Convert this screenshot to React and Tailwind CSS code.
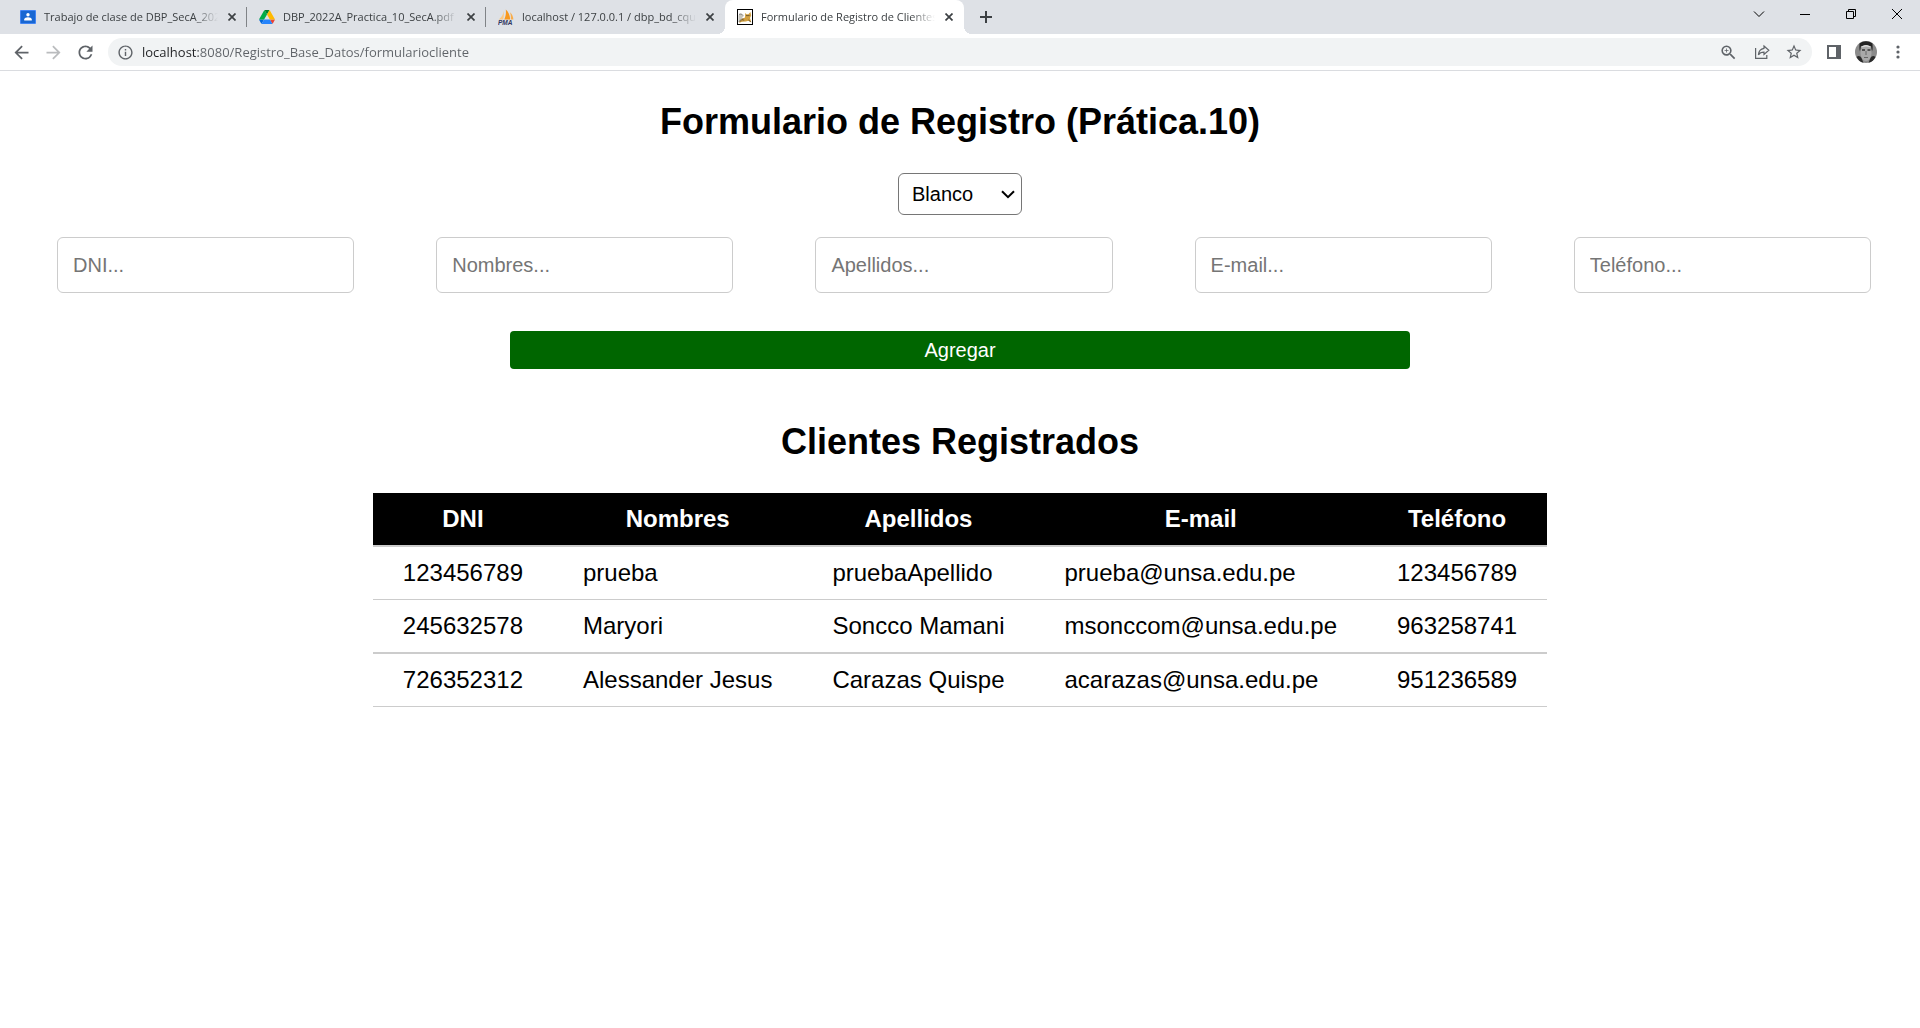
import React from "react";
import {
  MdArrowBack,
  MdArrowForward,
  MdRefresh,
  MdInfoOutline,
  MdZoomIn,
  MdStarBorder,
} from "react-icons/md";

function ClassroomIcon() {
  return (
    <svg viewBox="0 0 16 14" className="h-[14px] w-4">
      <rect width="16" height="14" rx="1" fill="#4285f4" />
      <rect x="1" y="1" width="14" height="12" fill="#1967d2" />
      <circle cx="8" cy="4.8" r="1.7" fill="#fff" />
      <path d="M4.2 10.4V9.6C4.2 8 6.4 7.3 8 7.3s3.8.7 3.8 2.3v.8z" fill="#fff" />
    </svg>
  );
}

function DriveIcon() {
  return (
    <svg viewBox="0 0 87.3 78" className="h-[14px] w-4">
      <path d="m6.6 66.85 3.85 6.65c.8 1.4 1.95 2.5 3.3 3.3L27.5 53H0c0 1.55.4 3.1 1.2 4.5z" fill="#0066da" />
      <path d="M43.65 25 29.9 1.2c-1.35.8-2.5 1.9-3.3 3.3L1.2 48.5A9 9 0 0 0 0 53h27.5z" fill="#00ac47" />
      <path d="M73.55 76.8c1.35-.8 2.5-1.9 3.3-3.3l1.6-2.75L86.1 57.5c.8-1.4 1.2-2.95 1.2-4.5H59.8l5.85 11.5z" fill="#ea4335" />
      <path d="M43.65 25 57.4 1.2C56.05.4 54.5 0 52.9 0H34.4c-1.6 0-3.15.45-4.5 1.2z" fill="#00832d" />
      <path d="M59.8 53H27.5L13.75 76.8c1.35.8 2.9 1.2 4.5 1.2h50.8c1.6 0 3.15-.45 4.5-1.2z" fill="#2684fc" />
      <path d="m73.4 26.5-12.7-22c-.8-1.4-1.95-2.5-3.3-3.3L43.65 25 59.8 53h27.45c0-1.55-.4-3.1-1.2-4.5z" fill="#ffba00" />
    </svg>
  );
}

function PhpMyAdminIcon() {
  return (
    <svg viewBox="0 0 16 16" className="size-4">
      <path d="M5.500 2C5.400 5.500 4 8 .8 10.400h4.400C5.900 7.500 6 4.800 5.500 2z" fill="#fbc983" />
      <path d="M7.800.6C10.600 3.200 12.200 6.600 12 10.400H6.200C7.800 7.400 8.200 4 7.800.6z" fill="#f8981d" />
      <path d="M12 3.200c2.200 2 3.200 4.400 3.400 7.200h-2.600c.2-2.700 0-5-.8-7.200z" fill="#f9ad4b" />
      <text x="0" y="15.800" fontSize="6.500" fontWeight="700" fontStyle="italic" fill="#2f3560" fontFamily="Liberation Sans, sans-serif">
        PMA
      </text>
    </svg>
  );
}

function TomcatIcon() {
  return (
    <svg viewBox="0 0 16 16" className="size-4">
      <rect x=".5" y=".5" width="15" height="15" fill="#fff" stroke="#000" />
      <path d="M1.500 6.500C3 4.500 5.500 4.500 7 6.500L5 9 1.500 13z" fill="#c9c6bd" />
      <path d="M2 5.500c1.200-.8 2.600-.6 3.500.5M2 12.500c1.500-2 3-3 5-3" fill="none" stroke="#777" />
      <path d="M8.200 4l1.400 1.200h1.800L13.400 3l.8 3.600-1.200 2.400 1.400 4.400-3-1.600-2.600.8-3.800.2-3 1.200 2.200-3.800L8 8.400z" fill="#d2a041" />
      <path d="M2.400 13l2.400-2.400 2.400.6M11.400 11l2.400 1.800M9 6.600h3.600" fill="none" stroke="#5a4a2a" strokeWidth=".8" />
    </svg>
  );
}

const tabs = [
  { title: "Trabajo de clase de DBP_SecA_2022", Icon: ClassroomIcon },
  { title: "DBP_2022A_Practica_10_SecA.pdf -", Icon: DriveIcon },
  { title: "localhost / 127.0.0.1 / dbp_bd_cquispe", Icon: PhpMyAdminIcon },
  { title: "Formulario de Registro de Clientes", Icon: TomcatIcon, active: true },
];

function Tab({ title, Icon, active, divider }) {
  return (
    <div
      className={
        active
          ? "relative flex h-full w-[239px] items-center rounded-t-lg bg-white pr-[9px] pl-3 before:absolute before:bottom-0 before:-left-2 before:size-2 before:bg-[radial-gradient(circle_at_0_0,transparent_8px,white_8px)] after:absolute after:-right-2 after:bottom-0 after:size-2 after:bg-[radial-gradient(circle_at_100%_0,transparent_8px,white_8px)]"
          : "relative flex h-full w-[239px] items-center pr-[9px] pl-3"
      }
    >
      <button type="button" className="flex min-w-0 flex-1 items-center gap-2 text-left">
        <span className="shrink-0">
          <Icon />
        </span>
        <span className="flex-1 overflow-hidden whitespace-nowrap text-[11px] leading-4 text-[#3c4043] [mask-image:linear-gradient(to_right,black_86%,transparent)]">
          {title}
        </span>
      </button>
      <button type="button" aria-label="Cerrar pestaña" className="ml-2 flex h-4 w-3 items-center justify-center">
        <svg viewBox="0 0 8 8" className="size-2">
          <path d="M.5.5l7 7M7.5.5l-7 7" stroke="#3c4043" strokeWidth="1.7" />
        </svg>
      </button>
      {divider && <span className="absolute top-[7px] right-0 h-5 w-px bg-[#808387]" />}
    </div>
  );
}

function WindowButton({ label, children }) {
  return (
    <button type="button" aria-label={label} className="flex h-7 w-[46px] items-center justify-center">
      <svg viewBox="0 0 10 10" className="size-[10px] overflow-visible" fill="none" stroke="#000">
        {children}
      </svg>
    </button>
  );
}

function Browser() {
  return (
    <header className="border-b border-[#dadce0] font-['Open_Sans','Noto_Sans',sans-serif]">
      <div className="flex h-[34px] bg-[#dee1e6] pl-2">
        {tabs.map((t, i) => (
          <Tab key={t.title} {...t} divider={i < 2} />
        ))}
        <button type="button" aria-label="Nueva pestaña" className="ml-2 flex w-7 items-center justify-center">
          <svg viewBox="0 0 12 12" className="size-3">
            <path d="M6 0v12M0 6h12" stroke="#3c4043" strokeWidth="2" />
          </svg>
        </button>
        <div className="ml-auto flex">
          <WindowButton label="Buscar pestañas">
            <path d="M0 2.5l5 5 5-5" />
          </WindowButton>
          <WindowButton label="Minimizar">
            <path d="M0 5.5h10" />
          </WindowButton>
          <WindowButton label="Restaurar">
            <path d="M.5 2.5h7v7h-7zM2.5 2.5v-2h7v7h-2" />
          </WindowButton>
          <WindowButton label="Cerrar">
            <path d="M0 0l10 10M10 0L0 10" />
          </WindowButton>
        </div>
      </div>
      <div className="flex h-9 items-center bg-white pr-[10px] pl-[5px] text-[#5f6368]">
        <button type="button" aria-label="Atrás" className="flex w-8 justify-center">
          <MdArrowBack size={21} />
        </button>
        <button type="button" aria-label="Adelante" className="flex w-8 justify-center text-[#babcbe]">
          <MdArrowForward size={21} />
        </button>
        <button type="button" aria-label="Volver a cargar" className="flex w-8 justify-center">
          <MdRefresh size={21} />
        </button>
        <div className="ml-[7px] flex h-7 flex-1 items-center rounded-full bg-[#f1f3f4] pr-[2px] pl-[9px]">
          <MdInfoOutline size={17} />
          <input
            type="text"
            aria-label="Dirección"
            defaultValue="localhost:8080/Registro_Base_Datos/formulariocliente"
            className="ml-2 min-w-0 flex-1 bg-[linear-gradient(90deg,#202124_56px,#5f6368_56px)] bg-clip-text text-[13px] leading-5 text-transparent outline-none"
          />
          <button type="button" aria-label="Zoom" className="flex w-[33px] justify-center">
            <MdZoomIn size={19} />
          </button>
          <button type="button" aria-label="Compartir" className="flex w-[33px] justify-center">
            <svg viewBox="0 0 16 16" className="size-4" fill="none" stroke="#5f6368" strokeWidth="1.2">
              <path d="M1.6 4v10.4h11.2V11" />
              <path d="M10 2l4.8 4.2L10 10.4V8.2c-2.600 0-4.400.8-5.600 2.600.3-3.600 2.200-6 5.600-6.500z" />
            </svg>
          </button>
          <button type="button" aria-label="Marcador" className="flex w-8 justify-center">
            <MdStarBorder size={18} />
          </button>
        </div>
        <button type="button" aria-label="Panel lateral" className="ml-[6px] flex w-8 justify-center">
          <svg viewBox="0 0 14 14" className="size-[14px]">
            <path fillRule="evenodd" d="M0 0h14v14H0zM2 2v10h7V2z" fill="#5f6368" />
          </svg>
        </button>
        <button type="button" aria-label="Perfil" className="flex w-8 justify-center">
          <svg viewBox="0 0 22 22" className="size-[22px]">
            <circle cx="11" cy="11" r="11" fill="#8b8b8b" />
            <path d="M4.500 2.500a11 11 0 0 1 13 0c0 2 .5 5-.5 8L16 5H6l-1 5.500c-1-3-.5-6-.5-8z" fill="#222" />
            <ellipse cx="11" cy="12" rx="5.500" ry="8" fill="#a9a9a9" />
            <path d="M6 6.500C7 3 15 3 16 6.500l-5-1z" fill="#d8d8d8" />
            <path d="M7 9h3M12.500 9h3" stroke="#333" strokeWidth="1.300" />
            <path d="M11 10v4M9 16.500h4" stroke="#666" strokeWidth="1" />
            <path d="M1.500 16c2-2 4-1 5 1l2 4.700C5 21 3 19 1.500 16zM20.500 16c-2-2-4-1-5 1l-2 4.700c3.500-.7 5.500-2.700 7-5.700z" fill="#2b2b2b" />
          </svg>
        </button>
        <button type="button" aria-label="Menú" className="flex w-7 justify-center pl-1">
          <svg viewBox="0 0 4 14" className="h-[14px] w-1" fill="#5f6368">
            <circle cx="2" cy="2" r="1.600" />
            <circle cx="2" cy="7" r="1.600" />
            <circle cx="2" cy="12" r="1.600" />
          </svg>
        </button>
      </div>
    </header>
  );
}

const fields = [
  { id: "dni", label: "DNI" },
  { id: "nombres", label: "Nombres" },
  { id: "apellidos", label: "Apellidos" },
  { id: "email", label: "E-mail" },
  { id: "telefono", label: "Teléfono" },
];

const clientes = [
  ["123456789", "prueba", "pruebaApellido", "prueba@unsa.edu.pe", "123456789"],
  ["245632578", "Maryori", "Soncco Mamani", "msonccom@unsa.edu.pe", "963258741"],
  ["726352312", "Alessander Jesus", "Carazas Quispe", "acarazas@unsa.edu.pe", "951236589"],
];

export default function App() {
  return (
    <div className="min-h-screen bg-white text-black">
      <Browser />
      <main className="px-3 pt-[31px] font-['Liberation_Sans',Arial,sans-serif]">
        <h1 className="text-center text-4xl font-bold">Formulario de Registro (Prática.10)</h1>
        <form onSubmit={(e) => e.preventDefault()} className="mt-[31px] flex flex-col items-center">
          <div className="grid">
            <select
              aria-label="Color de fondo"
              defaultValue="Blanco"
              className="col-start-1 row-start-1 h-[42px] w-[124px] appearance-none rounded-md border border-[#767676] bg-white pl-[13px] text-xl leading-6"
            >
              <option>Blanco</option>
              <option>Celeste</option>
              <option>Verde</option>
            </select>
            <svg
              viewBox="0 0 14 9"
              className="pointer-events-none col-start-1 row-start-1 mr-[7px] h-[9px] w-[14px] self-center justify-self-end"
              fill="none"
              stroke="#000"
              strokeWidth="2"
            >
              <path d="M1 1.200l6 6 6-6" />
            </svg>
          </div>
          <div className="mt-[22px] grid w-full grid-cols-5">
            {fields.map((f) => (
              <div key={f.id} className="pr-[37px] pl-[45px]">
                <input
                  id={f.id}
                  name={f.id}
                  type="text"
                  aria-label={f.label}
                  placeholder={f.label + "..."}
                  className="block h-14 w-full rounded-md border border-[#ccc] px-[15px] text-xl leading-6 placeholder:text-[#757575]"
                />
              </div>
            ))}
          </div>
          <button type="submit" className="mt-[38px] h-[38px] w-full max-w-[900px] rounded bg-[#006600] pb-px text-xl leading-6 text-white">
            Agregar
          </button>
        </form>
        <h2 className="mt-[53px] text-center text-4xl font-bold">Clientes Registrados</h2>
        <table className="mx-auto mt-[31px] border-separate border-spacing-0 text-2xl leading-7">
          <thead>
            <tr className="bg-black text-white">
              {fields.map((f) => (
                <th key={f.id} className="border-b-2 border-[#ccc] bg-clip-padding px-[30px] py-3 font-bold">
                  {f.label}
                </th>
              ))}
            </tr>
          </thead>
          <tbody>
            {clientes.map((row, r) => (
              <tr key={row[0]}>
                {row.map((cell, c) => (
                  <td
                    key={c}
                    className={
                      r % 2 === 1
                        ? "border-b-2 border-[#ccc] px-[30px] py-3"
                        : "border-b border-[#ccc] px-[30px] py-3"
                    }
                  >
                    {cell}
                  </td>
                ))}
              </tr>
            ))}
          </tbody>
        </table>
      </main>
    </div>
  );
}
